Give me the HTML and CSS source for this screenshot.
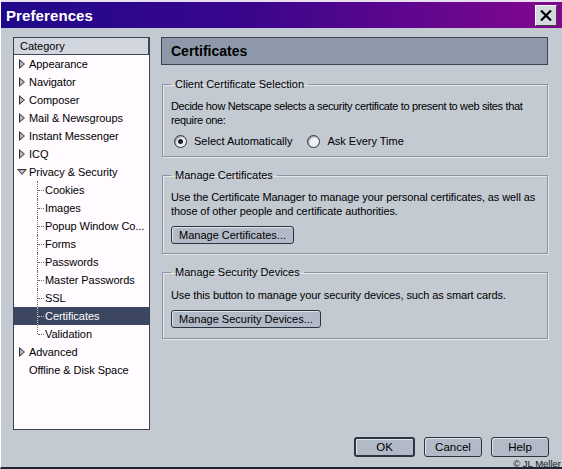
FILE: index.html
```html
<!DOCTYPE html>
<html lang="en">
<head>
    <meta charset="UTF-8">
    <title>Preferences</title>
    <link rel="stylesheet" href="styles.css">
</head>
<body>
    <div class="window">
        <div class="titlebar">
            <span class="title">Preferences</span>
            <button class="close-btn" type="button">
                <svg width="12" height="11" viewBox="0 0 12 11"><path d="M1 0.5 L11 10.5 M11 0.5 L1 10.5" stroke="#000" stroke-width="2.2"/></svg>
            </button>
        </div>

        <div class="content">
            <!-- Category tree -->
            <div class="sidebar">
                <div class="cat-head">Category</div>
                <ul class="tree">
                    <li class="node"><span class="twisty"></span>Appearance</li>
                    <li class="node"><span class="twisty"></span>Navigator</li>
                    <li class="node"><span class="twisty"></span>Composer</li>
                    <li class="node"><span class="twisty"></span>Mail &amp; Newsgroups</li>
                    <li class="node"><span class="twisty"></span>Instant Messenger</li>
                    <li class="node"><span class="twisty"></span>ICQ</li>
                    <li class="node"><span class="twisty open"></span>Privacy &amp; Security</li>
                    <li class="child">Cookies</li>
                    <li class="child">Images</li>
                    <li class="child">Popup Window Co...</li>
                    <li class="child">Forms</li>
                    <li class="child">Passwords</li>
                    <li class="child">Master Passwords</li>
                    <li class="child">SSL</li>
                    <li class="child selected">Certificates</li>
                    <li class="child last">Validation</li>
                    <li class="node"><span class="twisty"></span>Advanced</li>
                    <li class="node"><span class="twisty none"></span>Offline &amp; Disk Space</li>
                </ul>
            </div>

            <!-- Certificates panel -->
            <div class="panel">
                <div class="panel-head">Certificates</div>

                <fieldset class="group first">
                    <legend>Client Certificate Selection</legend>
                    <p class="tight">Decide how Netscape selects a security certificate to present to web sites that require one:</p>
                    <div class="radios">
                        <label class="radio"><span class="dot checked"></span>Select Automatically</label>
                        <label class="radio"><span class="dot"></span>Ask Every Time</label>
                    </div>
                </fieldset>

                <fieldset class="group">
                    <legend>Manage Certificates</legend>
                    <p>Use the Certificate Manager to manage your personal certificates, as well as those of other people and certificate authorities.</p>
                    <button class="btn" type="button">Manage Certificates...</button>
                </fieldset>

                <fieldset class="group last">
                    <legend>Manage Security Devices</legend>
                    <p>Use this button to manage your security devices, such as smart cards.</p>
                    <button class="btn" type="button">Manage Security Devices...</button>
                </fieldset>
            </div>
        </div>

        <div class="footer">
            <button class="btn dlg default" type="button">OK</button>
            <button class="btn dlg" type="button">Cancel</button>
            <button class="btn dlg" type="button">Help</button>
        </div>
        <div class="credit">&copy; JL Meller</div>
    </div>
</body>
</html>
```

FILE: styles.css
```css
/* Basic Reset */
* {
    margin: 0;
    padding: 0;
    box-sizing: border-box;
}

body {
    font-family: "Liberation Sans", Arial, sans-serif;
    font-size: 11px;
    color: #000;
    background: #c3cad2;
}

/* Window frame */
.window {
    width: 562px;
    height: 469px;
    background: #c3cad2;
    border-left: 1px solid #fff;
    border-bottom: 2px solid #1c2430;
    display: flex;
    flex-direction: column;
    overflow: hidden;
}

/* Title bar */
.titlebar {
    height: 28px;
    border-top: 2px solid #e8e0f0;
    background: linear-gradient(to right, #20088a 0%, #3a068c 45%, #62068e 75%, #82088e 100%);
    display: flex;
    align-items: center;
    justify-content: space-between;
    padding: 0 5px 0 5px;
    flex-shrink: 0;
}

.title {
    font-weight: bold;
    font-size: 15px;
    color: #fff;
    letter-spacing: 0.1px;
}

.close-btn {
    width: 22px;
    height: 21px;
    background: #d4d8e0;
    border: 1px solid;
    border-color: #fff #404040 #404040 #fff;
    display: flex;
    align-items: center;
    justify-content: center;
}

/* Main content */
.content {
    display: flex;
    gap: 11px;
    padding: 9px 14px 0 12px;
    height: 402px;
    flex-shrink: 0;
}

/* Category tree */
.sidebar {
    width: 137px;
    height: 393px;
    background: #fffbff;
    border: 1px solid #3c4452;
    flex-shrink: 0;
}

.cat-head {
    height: 17px;
    line-height: 16px;
    padding-left: 6px;
    background: #d2d6de;
    border-bottom: 1px solid #404858;
    border-right: 1px solid #404858;
    font-size: 11px;
}

.tree {
    list-style: none;
}

.tree li {
    height: 18px;
    line-height: 18px;
    font-size: 11px;
    letter-spacing: -0.05px;
    white-space: nowrap;
    position: relative;
}

.node {
    display: flex;
    align-items: center;
    padding-left: 4px;
}

.twisty {
    width: 11px;
    height: 18px;
    position: relative;
    flex-shrink: 0;
}

.twisty::before {
    content: "";
    position: absolute;
    left: 1px;
    top: 4px;
    border-style: solid;
    border-width: 5px 0 5px 6px;
    border-color: transparent transparent transparent #303030;
}

.twisty::after {
    content: "";
    position: absolute;
    left: 2px;
    top: 5.5px;
    border-style: solid;
    border-width: 3.5px 0 3.5px 4px;
    border-color: transparent transparent transparent #b4b8c0;
}

.twisty.open::before {
    left: -1px;
    top: 6px;
    border-width: 6px 5px 0 5px;
    border-color: #303030 transparent transparent transparent;
}

.twisty.open::after {
    left: 0.5px;
    top: 7px;
    border-width: 4px 3.5px 0 3.5px;
    border-color: #b4b8c0 transparent transparent transparent;
}

.twisty.none::before,
.twisty.none::after {
    display: none;
}

/* Child rows with dotted connectors */
.child {
    padding-left: 31px;
}

.child::before {
    content: "";
    position: absolute;
    left: 23px;
    top: 0;
    height: 18px;
    border-left: 1px dotted #707070;
}

.child.last::before {
    height: 9px;
}

.child::after {
    content: "";
    position: absolute;
    left: 24px;
    top: 9px;
    width: 6px;
    border-top: 1px dotted #707070;
}

.child.selected {
    background: #3c4660;
    color: #fff;
}

.child.selected::before,
.child.selected::after {
    border-color: #c0c4cc;
}

/* Right panel */
.panel {
    width: 387px;
    display: flex;
    flex-direction: column;
}

.panel-head {
    height: 28px;
    line-height: 26px;
    padding-left: 9px;
    background: #8d99a9;
    border: 1px solid #3c4452;
    font-weight: bold;
    font-size: 14px;
    margin-bottom: 12px;
}

/* Groups */
.group {
    border: 1px solid #8c94a0;
    box-shadow: inset 1px 1px 0 #e4e8ec, 1px 1px 0 #e4e8ec;
    padding: 8px 8px 9px 8px;
    margin: 0 0 11px 1px;
}

.group.first {
    padding-bottom: 8px;
}

.group.last {
    padding-top: 9px;
    padding-bottom: 10px;
}

.group legend {
    padding: 0 4px;
    line-height: 14px;
    font-size: 11px;
}

.group p {
    line-height: 14px;
    font-size: 11px;
    letter-spacing: -0.1px;
}

.group p.tight {
    letter-spacing: -0.35px;
}

.radios {
    display: flex;
    gap: 15px;
    margin-top: 7px;
    padding-left: 3px;
}

.radio {
    display: flex;
    align-items: center;
    height: 14px;
    font-size: 11px;
}

.dot {
    width: 13px;
    height: 13px;
    border-radius: 50%;
    border: 1px solid #30343c;
    background: #eef0f4;
    box-shadow: inset 1px 1px 1px #8a909a;
    margin-right: 7px;
    display: flex;
    align-items: center;
    justify-content: center;
}

.dot.checked::after {
    content: "";
    width: 5px;
    height: 5px;
    border-radius: 50%;
    background: #202428;
}

/* Buttons */
.btn {
    font-family: "Liberation Sans", Arial, sans-serif;
    font-size: 11px;
    color: #000;
    background: #b2bac8;
    border: 1px solid #2c3440;
    border-radius: 3px;
    box-shadow: inset 1px 1px 0 #dfe3ea;
    height: 18px;
    padding: 0 7px;
    margin-top: 8px;
    display: block;
}

/* Dialog buttons */
.footer {
    display: flex;
    justify-content: flex-end;
    gap: 9px;
    padding: 7px 13px 0 0;
}

.btn.dlg {
    width: 58px;
    height: 20px;
    margin-top: 0;
    padding: 0;
    font-size: 11.5px;
}

.btn.default {
    width: 61px;
    border-width: 2px;
}

.credit {
    align-self: flex-end;
    font-size: 9.5px;
    line-height: 11px;
    margin-top: 1px;
    margin-right: 1px;
    color: #101820;
}
```
